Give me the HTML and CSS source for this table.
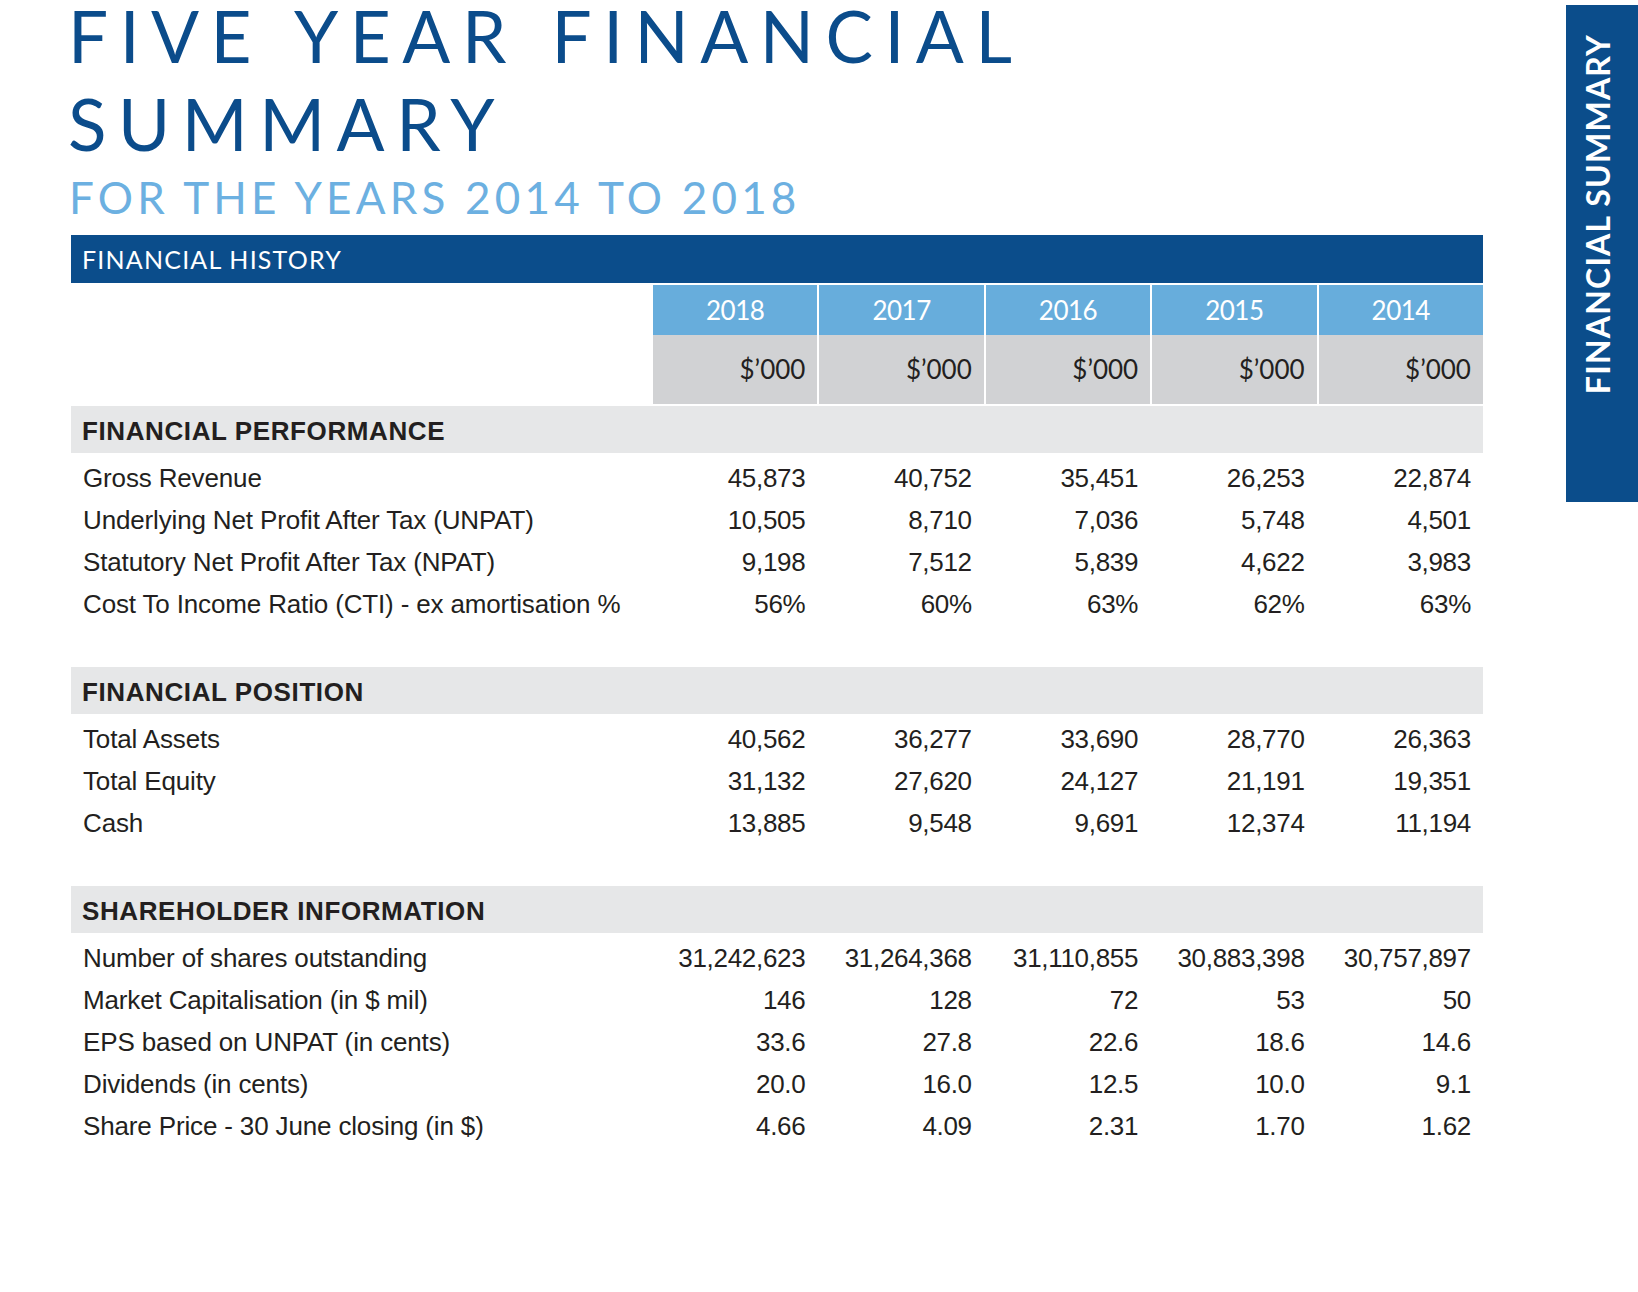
FILE: index.html
```html
<!DOCTYPE html>
<html lang="en">
<head>
<meta charset="utf-8">
<title>Five Year Financial Summary</title>
<link rel="stylesheet" href="styles.css">
</head>
<body>
<div class="page">
  <main class="main">
    <header class="titles">
      <h1 class="title">FIVE YEAR FINANCIAL<br>SUMMARY</h1>
      <p class="subtitle">FOR THE YEARS 2014 TO 2018</p>
    </header>
    <div class="bar">FINANCIAL HISTORY</div>
    <div class="table">
      <div class="grid head-years">
        <span class="blank"></span>
        <span class="yr">2018</span><span class="yr">2017</span><span class="yr">2016</span><span class="yr">2015</span><span class="yr">2014</span>
      </div>
      <div class="grid head-units">
        <span class="blank"></span>
        <span class="unit">$’000</span><span class="unit">$’000</span><span class="unit">$’000</span><span class="unit">$’000</span><span class="unit">$’000</span>
      </div>

      <section class="section first">
        <div class="band">FINANCIAL PERFORMANCE</div>
        <div class="rows">
          <div class="grid row"><span class="label">Gross Revenue</span><span class="num">45,873</span><span class="num">40,752</span><span class="num">35,451</span><span class="num">26,253</span><span class="num">22,874</span></div>
          <div class="grid row"><span class="label">Underlying Net Profit After Tax (UNPAT)</span><span class="num">10,505</span><span class="num">8,710</span><span class="num">7,036</span><span class="num">5,748</span><span class="num">4,501</span></div>
          <div class="grid row"><span class="label">Statutory Net Profit After Tax (NPAT)</span><span class="num">9,198</span><span class="num">7,512</span><span class="num">5,839</span><span class="num">4,622</span><span class="num">3,983</span></div>
          <div class="grid row"><span class="label">Cost To Income Ratio (CTI) - ex amortisation %</span><span class="num">56%</span><span class="num">60%</span><span class="num">63%</span><span class="num">62%</span><span class="num">63%</span></div>
        </div>
      </section>

      <section class="section">
        <div class="band">FINANCIAL POSITION</div>
        <div class="rows">
          <div class="grid row"><span class="label">Total Assets</span><span class="num">40,562</span><span class="num">36,277</span><span class="num">33,690</span><span class="num">28,770</span><span class="num">26,363</span></div>
          <div class="grid row"><span class="label">Total Equity</span><span class="num">31,132</span><span class="num">27,620</span><span class="num">24,127</span><span class="num">21,191</span><span class="num">19,351</span></div>
          <div class="grid row"><span class="label">Cash</span><span class="num">13,885</span><span class="num">9,548</span><span class="num">9,691</span><span class="num">12,374</span><span class="num">11,194</span></div>
        </div>
      </section>

      <section class="section">
        <div class="band">SHAREHOLDER INFORMATION</div>
        <div class="rows">
          <div class="grid row"><span class="label">Number of shares outstanding</span><span class="num">31,242,623</span><span class="num">31,264,368</span><span class="num">31,110,855</span><span class="num">30,883,398</span><span class="num">30,757,897</span></div>
          <div class="grid row"><span class="label">Market Capitalisation (in $ mil)</span><span class="num">146</span><span class="num">128</span><span class="num">72</span><span class="num">53</span><span class="num">50</span></div>
          <div class="grid row"><span class="label">EPS based on UNPAT (in cents)</span><span class="num">33.6</span><span class="num">27.8</span><span class="num">22.6</span><span class="num">18.6</span><span class="num">14.6</span></div>
          <div class="grid row"><span class="label">Dividends (in cents)</span><span class="num">20.0</span><span class="num">16.0</span><span class="num">12.5</span><span class="num">10.0</span><span class="num">9.1</span></div>
          <div class="grid row"><span class="label">Share Price - 30 June closing (in $)</span><span class="num">4.66</span><span class="num">4.09</span><span class="num">2.31</span><span class="num">1.70</span><span class="num">1.62</span></div>
        </div>
      </section>
    </div>
  </main>
  <aside class="tab"><span class="tab-text">FINANCIAL SUMMARY</span></aside>
</div>
</body>
</html>
```

FILE: styles.css
```css
* { box-sizing: border-box; }

body {
  margin: 0;
  background: #ffffff;
  font-family: "Liberation Sans", Arial, sans-serif;
  color: #231f20;
}

.page {
  display: flex;
  align-items: flex-start;
  width: 1638px;
}

.main {
  flex: 0 0 auto;
  width: 1483px;
  padding-left: 71px;
}

.title {
  margin: -8px 0 0 -3px;
  font-family: Lato, "Noto Sans", sans-serif;
  font-weight: 400;
  font-size: 71px;
  line-height: 88px;
  letter-spacing: 11.5px;
  word-spacing: 4px;
  color: #0b4c8b;
}

.subtitle {
  margin: 7px 0 0 -2px;
  font-family: Lato, "Noto Sans", sans-serif;
  font-weight: 400;
  font-size: 44px;
  line-height: 44px;
  letter-spacing: 4.2px;
  color: #6cb0e1;
}

.bar {
  margin-top: 16px;
  height: 48px;
  line-height: 48px;
  padding-left: 11px;
  background: #0b4d8b;
  color: #ffffff;
  font-family: Lato, "Noto Sans", sans-serif;
  font-size: 25px;
  letter-spacing: 1.2px;
}

.grid {
  display: grid;
  grid-template-columns: 580px repeat(5, 164.4px);
  column-gap: 2px;
}

.head-years {
  margin-top: 2px;
  height: 48px;
}

.yr {
  background: #67addc;
  color: #ffffff;
  text-align: center;
  font-family: Lato, "Noto Sans", sans-serif;
  font-size: 26px;
  line-height: 50px;
  letter-spacing: -0.5px;
}

.head-units {
  margin-top: 2px;
  height: 69px;
}

.unit {
  background: #d1d2d4;
  text-align: right;
  padding-right: 12px;
  font-family: Lato, "Noto Sans", sans-serif;
  font-size: 26px;
  line-height: 69px;
  color: #231f20;
}

.section { margin-top: 42px; }
.section.first { margin-top: 2px; }

.band {
  height: 47px;
  line-height: 50px;
  padding-left: 11px;
  background: #e6e7e8;
  font-weight: 700;
  font-size: 26px;
  letter-spacing: 0.6px;
  color: #231f20;
}

.rows { margin-top: 4px; }

.row {
  height: 42px;
  font-size: 26px;
  line-height: 42px;
  letter-spacing: -0.15px;
}

.label {
  padding-left: 12px;
  white-space: nowrap;
}

.num {
  text-align: right;
  padding-right: 12px;
  white-space: nowrap;
  letter-spacing: -0.3px;
}

.tab {
  flex: 0 0 auto;
  display: flex;
  flex-direction: column;
  align-items: flex-start;
  margin-left: 83px;
  margin-top: 5px;
  width: 72px;
  height: 497px;
  padding-left: 16px;
  padding-top: 29px;
  background: #0b4d8b;
}

.tab-text {
  writing-mode: vertical-rl;
  transform: rotate(180deg);
  font-family: Lato, "Noto Sans", sans-serif;
  font-weight: 700;
  font-size: 32px;
  line-height: 32px;
  letter-spacing: 1.2px;
  color: #ffffff;
  white-space: nowrap;
}
```
